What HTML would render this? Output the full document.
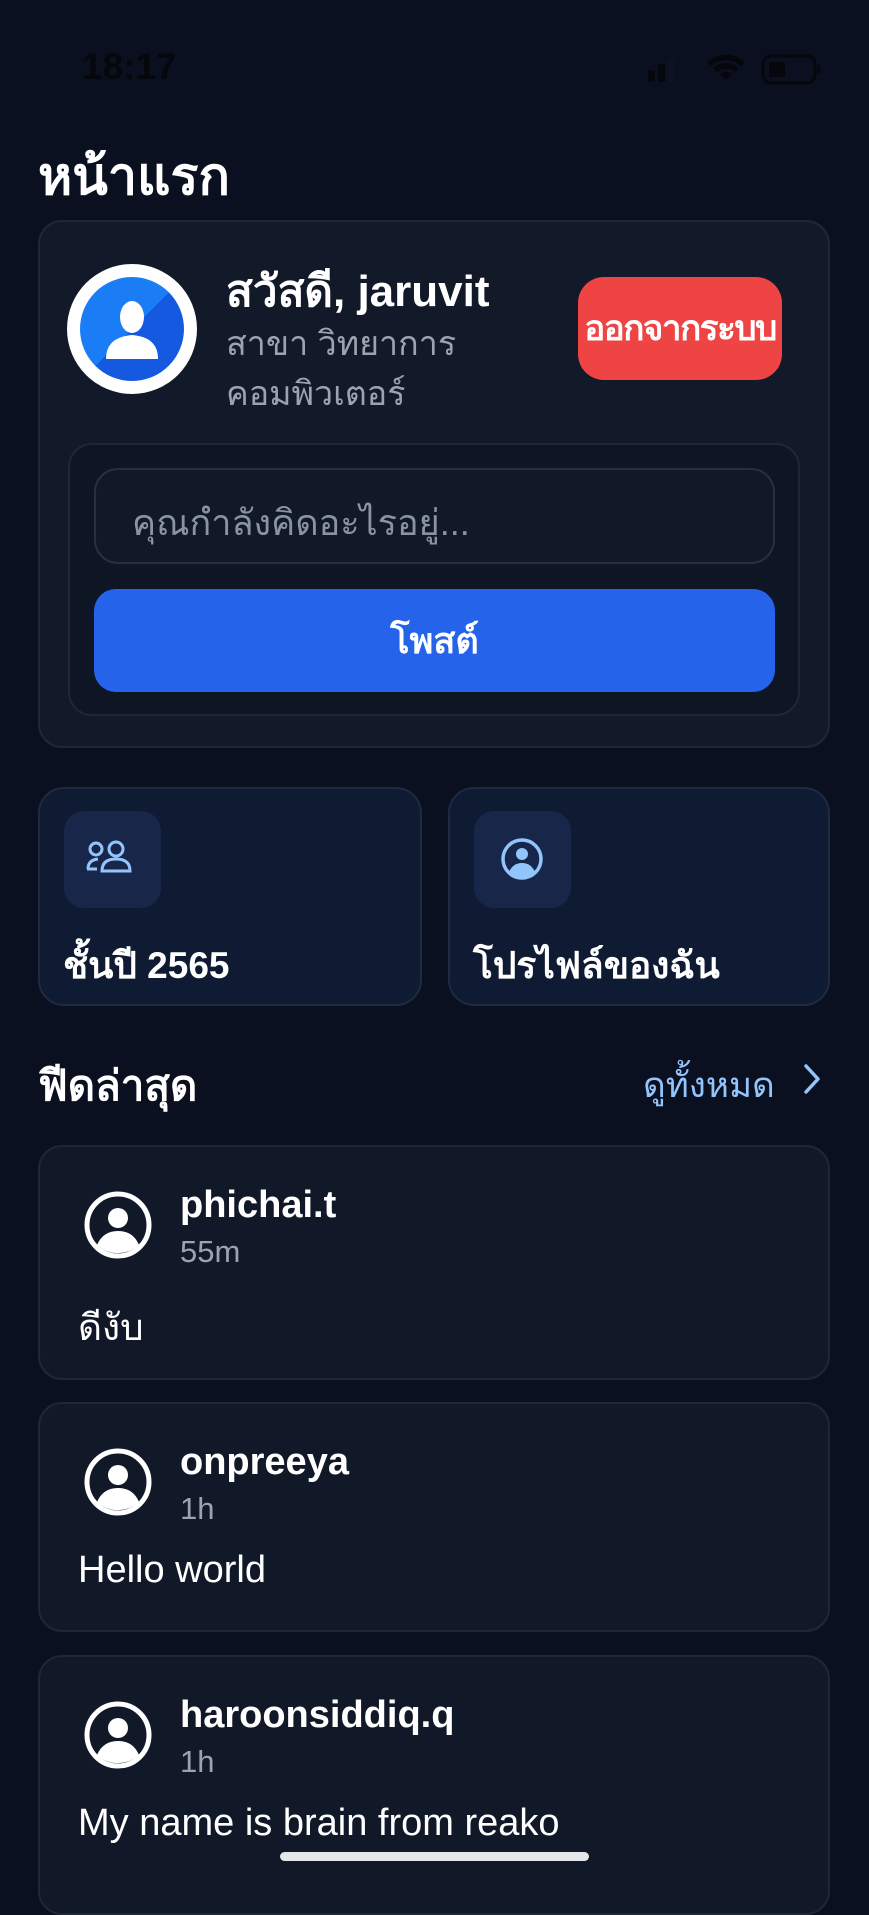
<!DOCTYPE html>
<html><head><meta charset="utf-8"><style>
*{margin:0;padding:0;box-sizing:border-box}
body{width:869px;height:1882px;background:#0b1020;font-family:"Liberation Sans","Noto Sans CJK SC",sans-serif;color:#fff;position:relative;overflow:hidden}
.a{position:absolute;white-space:nowrap}
.card{position:absolute;background:#111827;border:2px solid #1e2738;border-radius:24px}
.tile{position:absolute;background:#0f1a33;border:2px solid #1e2a40;border-radius:26px}
.ib{position:absolute;left:24px;top:22px;width:97px;height:97px;background:#18264a;border-radius:20px}
.b{font-weight:bold}
</style></head><body>
<div class="a b" style="left:82px;top:46px;font-size:37px;color:#05070c">18:17</div>
<svg class="a" style="left:645px;top:52px" width="180" height="34" viewBox="0 0 180 34">
<rect x="3" y="18" width="7" height="12" rx="1" fill="#05070c"/><rect x="13" y="12" width="7" height="18" rx="1" fill="#05070c"/><rect x="23" y="6" width="7" height="24" rx="1" fill="#0d1322"/>
<path d="M81 28l-6-6a9 9 0 0 1 12 0z M68 16a19 19 0 0 1 26 0l-4 4a14 14 0 0 0-18 0z M62 10a28 28 0 0 1 38 0l-4 4a23 23 0 0 0-30 0z" fill="#05070c"/>
<rect x="118" y="4" width="52" height="27" rx="8" fill="none" stroke="#05070c" stroke-width="3"/><rect x="124" y="10" width="16" height="15" rx="2" fill="#05070c"/><rect x="172" y="13" width="3" height="9" rx="1" fill="#05070c"/>
</svg>
<div class="a b" style="left:38px;top:134px;font-size:52px">หน้าแรก</div>

<div class="card" style="left:38px;top:220px;width:792px;height:528px;background:#121a2a"></div>
<div class="a" style="left:67px;top:264px;width:130px;height:130px;border-radius:50%;background:#fff"></div>
<div class="a" style="left:80px;top:277px;width:104px;height:104px;border-radius:50%;background:linear-gradient(135deg,#1a7df5 50%,#1459e0 50%);overflow:hidden">
<svg width="104" height="104" viewBox="0 0 104 104"><ellipse cx="52" cy="40" rx="12" ry="16" fill="#fff"/><path d="M26 82q0-22 26-24q26 2 26 24z" fill="#fff"/></svg></div>
<div class="a b" style="left:226px;top:256px;font-size:44px">สวัสดี, jaruvit</div>
<div class="a" style="left:226px;top:316px;font-size:34px;color:#9ca3af">สาขา วิทยาการ</div>
<div class="a" style="left:226px;top:366px;font-size:34px;color:#9ca3af">คอมพิวเตอร์</div>
<div class="a b" style="left:578px;top:277px;width:204px;height:103px;background:#ef4444;border-radius:26px;font-size:35px;display:flex;align-items:center;justify-content:center;letter-spacing:-1.5px">ออกจากระบบ</div>

<div class="a" style="left:68px;top:443px;width:732px;height:273px;background:#0e1525;border:2px solid #1e2738;border-radius:24px"></div>
<div class="a" style="left:94px;top:468px;width:681px;height:96px;background:#111827;border:2px solid #263042;border-radius:24px"></div>
<div class="a" style="left:132px;top:494px;font-size:36px;color:#8a93a3">คุณกำลังคิดอะไรอยู่...</div>
<div class="a b" style="left:94px;top:589px;width:681px;height:103px;background:#2563eb;border-radius:22px;font-size:36px;display:flex;align-items:center;justify-content:center">โพสต์</div>

<div class="tile" style="left:38px;top:787px;width:384px;height:219px"><div class="ib">
<svg width="97" height="97" viewBox="0 0 97 97" fill="none" stroke="#93c5fd" stroke-width="3"><circle cx="32" cy="38" r="6"/><circle cx="52" cy="38" r="7"/><path d="M24 58q0-9 10-10M23 58h10M38 60q0-12 14-12q14 0 14 12z"/></svg></div>
<div class="a b" style="left:23px;top:147px;font-size:37px">ชั้นปี 2565</div></div>
<div class="tile" style="left:448px;top:787px;width:382px;height:219px"><div class="ib">
<svg width="97" height="97" viewBox="0 0 97 97"><circle cx="48" cy="48" r="19" fill="none" stroke="#93c5fd" stroke-width="3.5"/><circle cx="48" cy="43" r="6" fill="#93c5fd"/><path d="M35 61q4-9 13-9q9 0 13 9a19 19 0 0 1-26 0z" fill="#93c5fd"/></svg></div>
<div class="a b" style="left:23px;top:147px;font-size:37px">โปรไฟล์ของฉัน</div></div>

<div class="a b" style="left:38px;top:1053px;font-size:42px">ฟีดล่าสุด</div>
<div class="a" style="left:643px;top:1058px;font-size:35px;color:#93c5fd">ดูทั้งหมด</div>
<svg class="a" style="left:800px;top:1062px" width="24" height="34" viewBox="0 0 24 34"><path d="M6 4l12 13l-12 13" fill="none" stroke="#93c5fd" stroke-width="3.5" stroke-linecap="round" stroke-linejoin="round"/></svg>

<div class="card" style="left:38px;top:1145px;width:792px;height:235px"></div>
<div class="card" style="left:38px;top:1402px;width:792px;height:230px"></div>
<div class="card" style="left:38px;top:1655px;width:792px;height:260px"></div>

<svg class="a" style="left:84px;top:1191px" width="68" height="68" viewBox="0 0 68 68"><circle cx="34" cy="34" r="31" fill="none" stroke="#fff" stroke-width="5"/><circle cx="34" cy="27" r="10" fill="#fff"/><path d="M13 54q6-14 21-14q15 0 21 14a31 31 0 0 1-42 0z" fill="#fff"/></svg>
<div class="a b" style="left:180px;top:1184px;font-size:38px">phichai.t</div>
<div class="a" style="left:180px;top:1234px;font-size:31px;color:#9ca3af">55m</div>
<div class="a" style="left:78px;top:1298px;font-size:37px">ดีงับ</div>

<svg class="a" style="left:84px;top:1448px" width="68" height="68" viewBox="0 0 68 68"><circle cx="34" cy="34" r="31" fill="none" stroke="#fff" stroke-width="5"/><circle cx="34" cy="27" r="10" fill="#fff"/><path d="M13 54q6-14 21-14q15 0 21 14a31 31 0 0 1-42 0z" fill="#fff"/></svg>
<div class="a b" style="left:180px;top:1441px;font-size:38px">onpreeya</div>
<div class="a" style="left:180px;top:1491px;font-size:31px;color:#9ca3af">1h</div>
<div class="a" style="left:78px;top:1549px;font-size:38px">Hello world</div>

<div class="a" style="left:84px;top:1701px"><svg width="68" height="68" viewBox="0 0 68 68"><circle cx="34" cy="34" r="31" fill="none" stroke="#fff" stroke-width="5"/><circle cx="34" cy="27" r="10" fill="#fff"/><path d="M13 54q6-14 21-14q15 0 21 14a31 31 0 0 1-42 0z" fill="#fff"/></svg></div>
<div class="a b" style="left:180px;top:1694px;font-size:38px">haroonsiddiq.q</div>
<div class="a" style="left:180px;top:1744px;font-size:31px;color:#9ca3af">1h</div>
<div class="a" style="left:78px;top:1802px;font-size:38px">My name is brain from reako</div>

<div class="a" style="left:280px;top:1852px;width:309px;height:9px;border-radius:5px;background:#e5e7eb"></div>
</body></html>
